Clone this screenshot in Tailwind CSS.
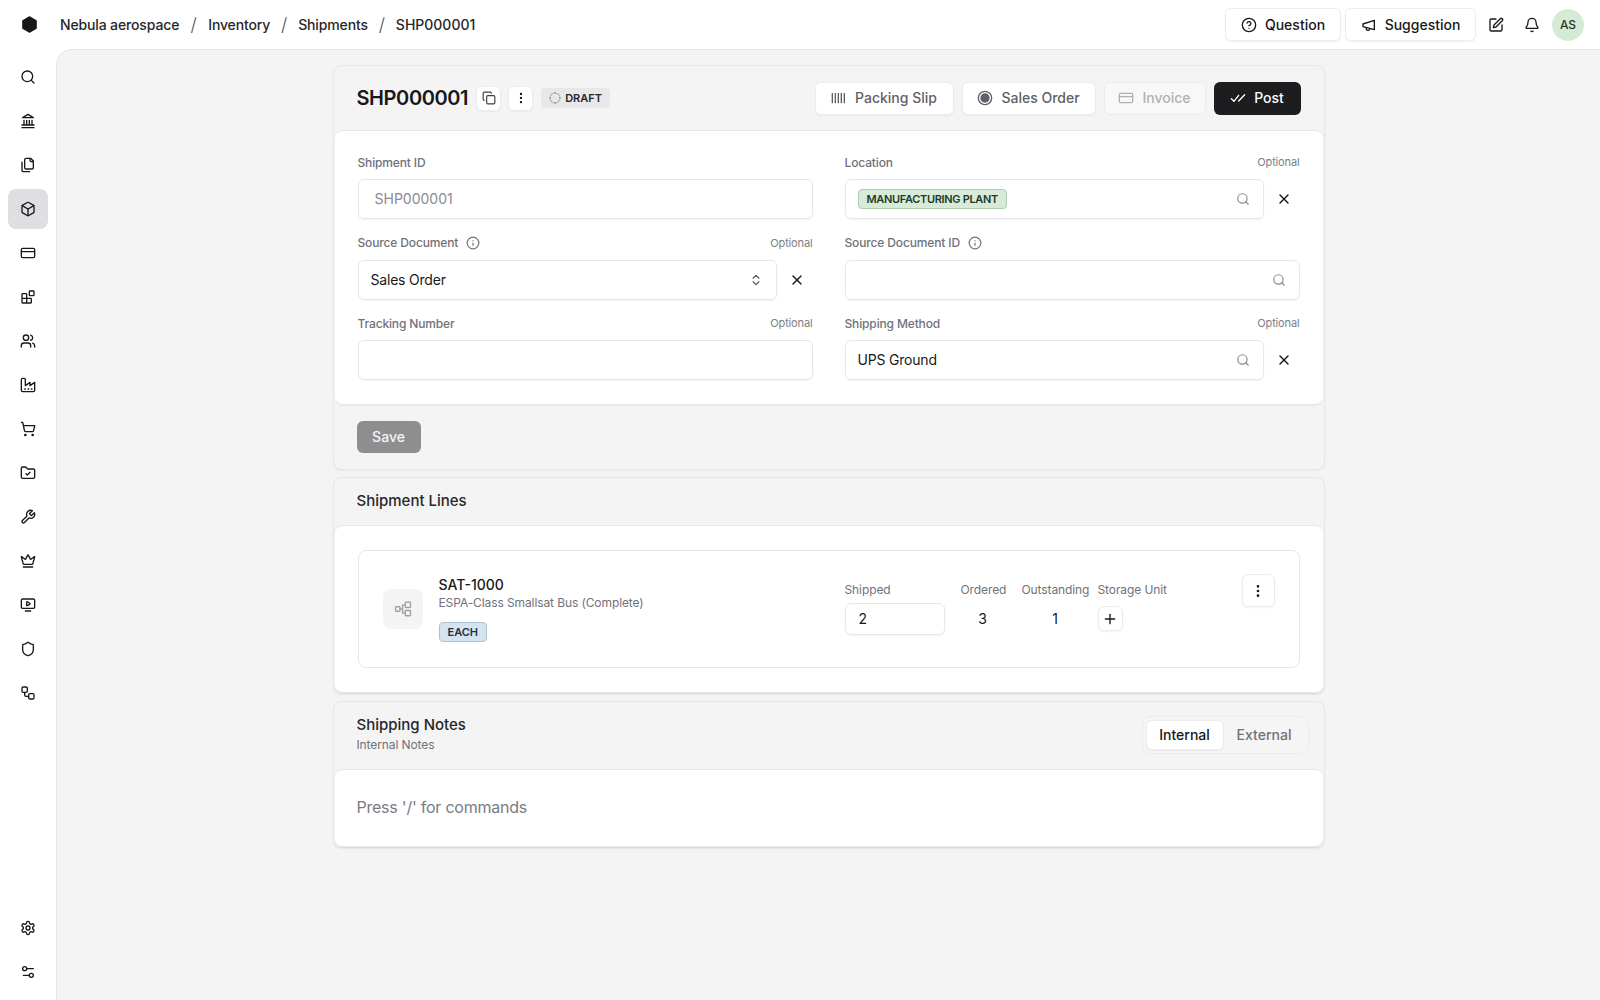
<!DOCTYPE html>
<html lang="en">
<head>
  <meta charset="UTF-8" />
  <title>SHP000001</title>
  <script src="https://cdn.jsdelivr.net/npm/@tailwindcss/browser@4"></script>
</head>
<body class="bg-white text-[#18181b] [font-family:Inter,sans-serif] overflow-hidden">
  <!-- icon sprite -->
  <svg class="hidden">
    <symbol id="i-search" viewBox="0 0 24 24"><circle cx="11" cy="11" r="8"/><path d="m21 21-4.3-4.3"/></symbol>
    <symbol id="i-landmark" viewBox="0 0 24 24"><path d="M3 22h18M6 18v-7M10 18v-7M14 18v-7M18 18v-7M3 18h18"/><path d="M12 2 20 7H4Z"/></symbol>
    <symbol id="i-files" viewBox="0 0 24 24"><path d="M20 7h-3a2 2 0 0 1-2-2V2"/><path d="M9 18a2 2 0 0 1-2-2V4a2 2 0 0 1 2-2h7l4 4v10a2 2 0 0 1-2 2Z"/><path d="M3 7.6v12.8A1.6 1.6 0 0 0 4.6 22h9.8"/></symbol>
    <symbol id="i-box" viewBox="0 0 24 24"><path d="M21 8a2 2 0 0 0-1-1.73l-7-4a2 2 0 0 0-2 0l-7 4A2 2 0 0 0 3 8v8a2 2 0 0 0 1 1.73l7 4a2 2 0 0 0 2 0l7-4A2 2 0 0 0 21 16Z"/><path d="m3.3 7 8.7 5 8.7-5"/><path d="M12 22V12"/></symbol>
    <symbol id="i-card" viewBox="0 0 24 24"><rect x="2" y="5" width="20" height="14" rx="2"/><path d="M2 10h20"/></symbol>
    <symbol id="i-blocks" viewBox="0 0 24 24"><rect x="14" y="3" width="7" height="7" rx="1"/><path d="M10 21V8a1 1 0 0 0-1-1H4a1 1 0 0 0-1 1v12a1 1 0 0 0 1 1h12a1 1 0 0 0 1-1v-5a1 1 0 0 0-1-1H3"/></symbol>
    <symbol id="i-users" viewBox="0 0 24 24"><path d="M16 21v-2a4 4 0 0 0-4-4H6a4 4 0 0 0-4 4v2"/><circle cx="9" cy="7" r="4"/><path d="M22 21v-2a4 4 0 0 0-3-3.87"/><path d="M16 3.13a4 4 0 0 1 0 7.75"/></symbol>
    <symbol id="i-factory" viewBox="0 0 24 24"><path d="M2 20a2 2 0 0 0 2 2h16a2 2 0 0 0 2-2V8l-7 5V8l-7 5V4a2 2 0 0 0-2-2H4a2 2 0 0 0-2 2Z"/><path d="M17 18h1M12 18h1M7 18h1"/></symbol>
    <symbol id="i-cart" viewBox="0 0 24 24"><circle cx="8" cy="21" r="1"/><circle cx="19" cy="21" r="1"/><path d="M2.05 2.05h2l2.66 12.42a2 2 0 0 0 2 1.58h9.78a2 2 0 0 0 1.95-1.57l1.65-7.43H5.12"/></symbol>
    <symbol id="i-folder" viewBox="0 0 24 24"><path d="M20 20a2 2 0 0 0 2-2V8a2 2 0 0 0-2-2h-7.9a2 2 0 0 1-1.69-.9L9.6 3.9A2 2 0 0 0 7.93 3H4a2 2 0 0 0-2 2v13a2 2 0 0 0 2 2Z"/><path d="m9 13 2 2 4-4"/></symbol>
    <symbol id="i-wrench" viewBox="0 0 24 24"><path d="M14.7 6.3a1 1 0 0 0 0 1.4l1.6 1.6a1 1 0 0 0 1.4 0l3.77-3.77a6 6 0 0 1-7.94 7.94l-6.91 6.91a2.12 2.12 0 0 1-3-3l6.91-6.91a6 6 0 0 1 7.94-7.94l-3.76 3.76z"/></symbol>
    <symbol id="i-crown" viewBox="0 0 24 24"><path d="M11.562 3.266a.5.5 0 0 1 .876 0L15.39 8.87a1 1 0 0 0 1.516.294L21.183 5.5a.5.5 0 0 1 .798.519l-2.834 10.246a1 1 0 0 1-.956.734H5.81a1 1 0 0 1-.957-.734L2.02 6.02a.5.5 0 0 1 .798-.519l4.276 3.664a1 1 0 0 0 1.516-.294z"/><path d="M5 21h14"/></symbol>
    <symbol id="i-monitor" viewBox="0 0 24 24"><path d="M10 7.75a.75.75 0 0 1 1.142-.638l3.664 2.249a.75.75 0 0 1 0 1.278l-3.664 2.25a.75.75 0 0 1-1.142-.64z"/><path d="M8 21h8"/><rect x="2" y="3" width="20" height="14" rx="2"/></symbol>
    <symbol id="i-shield" viewBox="0 0 24 24"><path d="M20 13c0 5-3.5 7.5-7.66 8.95a1 1 0 0 1-.67-.01C7.5 20.5 4 18 4 13V6a1 1 0 0 1 1-1c2 0 4.5-1.2 6.24-2.72a1.17 1.17 0 0 1 1.52 0C14.51 3.81 17 5 19 5a1 1 0 0 1 1 1z"/></symbol>
    <symbol id="i-workflow" viewBox="0 0 24 24"><rect x="3" y="3" width="8" height="8" rx="2"/><path d="M7 11v4a2 2 0 0 0 2 2h4"/><rect x="13" y="13" width="8" height="8" rx="2"/></symbol>
    <symbol id="i-gear" viewBox="0 0 24 24"><path d="M12.22 2h-.44a2 2 0 0 0-2 2v.18a2 2 0 0 1-1 1.73l-.43.25a2 2 0 0 1-2 0l-.15-.08a2 2 0 0 0-2.73.73l-.22.38a2 2 0 0 0 .73 2.73l.15.1a2 2 0 0 1 1 1.72v.51a2 2 0 0 1-1 1.74l-.15.09a2 2 0 0 0-.73 2.73l.22.38a2 2 0 0 0 2.73.73l.15-.08a2 2 0 0 1 2 0l.43.25a2 2 0 0 1 1 1.73V20a2 2 0 0 0 2 2h.44a2 2 0 0 0 2-2v-.18a2 2 0 0 1 1-1.73l.43-.25a2 2 0 0 1 2 0l.15.08a2 2 0 0 0 2.73-.73l.22-.39a2 2 0 0 0-.73-2.73l-.15-.08a2 2 0 0 1-1-1.74v-.5a2 2 0 0 1 1-1.74l.15-.09a2 2 0 0 0 .73-2.73l-.22-.38a2 2 0 0 0-2.73-.73l-.15.08a2 2 0 0 1-2 0l-.43-.25a2 2 0 0 1-1-1.73V4a2 2 0 0 0-2-2z"/><circle cx="12" cy="12" r="3"/></symbol>
    <symbol id="i-sliders" viewBox="0 0 24 24"><path d="M20 7h-9M14 17H5"/><circle cx="17" cy="17" r="3"/><circle cx="7" cy="7" r="3"/></symbol>
    <symbol id="i-help" viewBox="0 0 24 24"><circle cx="12" cy="12" r="10"/><path d="M9.09 9a3 3 0 0 1 5.83 1c0 2-3 3-3 3"/><path d="M12 17h.01"/></symbol>
    <symbol id="i-speaker" viewBox="0 0 24 24"><path d="M3 10.5 20 5v14L3 14.5Z"/><path d="M8 16v2a2 2 0 0 0 2 2h1a2 2 0 0 0 2-2"/></symbol>
    <symbol id="i-edit" viewBox="0 0 24 24"><path d="M12 3H5a2 2 0 0 0-2 2v14a2 2 0 0 0 2 2h14a2 2 0 0 0 2-2v-7"/><path d="M18.375 2.625a1 1 0 0 1 3 3l-9.013 9.014a2 2 0 0 1-.853.505l-2.873.84a.5.5 0 0 1-.62-.62l.84-2.873a2 2 0 0 1 .506-.852z"/></symbol>
    <symbol id="i-bell" viewBox="0 0 24 24"><path d="M10.268 21a2 2 0 0 0 3.464 0"/><path d="M3.262 15.326A1 1 0 0 0 4 17h16a1 1 0 0 0 .74-1.673C19.41 13.956 18 12.499 18 8A6 6 0 0 0 6 8c0 4.499-1.411 5.956-2.738 7.326"/></symbol>
    <symbol id="i-copy" viewBox="0 0 24 24"><rect x="8" y="8" width="14" height="14" rx="2"/><path d="M4 16c-1.1 0-2-.9-2-2V4c0-1.1.9-2 2-2h10c1.1 0 2 .9 2 2"/></symbol>
    <symbol id="i-dots" viewBox="0 0 24 24"><circle cx="12" cy="5" r="1"/><circle cx="12" cy="12" r="1"/><circle cx="12" cy="19" r="1"/></symbol>
    <symbol id="i-dashed" viewBox="0 0 24 24"><path d="M10.1 2.18a9.93 9.93 0 0 1 3.8 0"/><path d="M17.6 3.71a9.95 9.95 0 0 1 2.69 2.7"/><path d="M21.82 10.1a9.93 9.93 0 0 1 0 3.8"/><path d="M20.29 17.6a9.95 9.95 0 0 1-2.7 2.69"/><path d="M13.9 21.82a9.94 9.94 0 0 1-3.8 0"/><path d="M6.4 20.29a9.95 9.95 0 0 1-2.69-2.7"/><path d="M2.18 13.9a9.93 9.93 0 0 1 0-3.8"/><path d="M3.71 6.4a9.95 9.95 0 0 1 2.7-2.69"/></symbol>
    <symbol id="i-barcode" viewBox="0 0 24 24"><path d="M2 5v14M6.500 5v14M11 5v14M15.500 5v14M20 5v14"/></symbol>
    <symbol id="i-check2" viewBox="0 0 24 24"><path d="M2 13l4 4L13 8"/><path d="M13 16.5 22 7"/></symbol>
    <symbol id="i-x" viewBox="0 0 24 24"><path d="M18 6 6 18"/><path d="m6 6 12 12"/></symbol>
    <symbol id="i-info" viewBox="0 0 24 24"><circle cx="12" cy="12" r="10"/><path d="M12 16v-4"/><path d="M12 8h.01"/></symbol>
    <symbol id="i-updown" viewBox="0 0 24 24"><path d="m7 15 5 5 5-5"/><path d="m7 9 5-5 5 5"/></symbol>
    <symbol id="i-plus" viewBox="0 0 24 24"><path d="M5 12h14"/><path d="M12 5v14"/></symbol>
    <symbol id="i-network" viewBox="0 0 24 24"><rect x="2" y="9" width="6" height="6" rx="1"/><rect x="15" y="3" width="7" height="7" rx="1"/><rect x="15" y="14" width="7" height="7" rx="1"/><path d="M8 12h3.500M11.500 6.500v11M11.500 6.500H15M11.500 17.500H15"/></symbol>
  </svg>

  <div class="flex flex-col h-screen">
    <header class="h-[49px] flex items-center shrink-0 pr-4">
      <div class="w-[60px] flex justify-center pr-[1px]">
        <svg class="size-[17px]" viewBox="0 0 24 24" fill="#18181b"><path d="M12 1 21.500 6.500v11L12 23 2.500 17.500v-11Z" stroke="#18181b" stroke-width="1.500" stroke-linejoin="round"/></svg>
      </div>
      <nav class="flex items-center text-sm font-medium text-[#27272a]">
        <span class="tracking-[-0.14px]">Nebula aerospace</span>
        <span class="w-[29px] text-center text-lg font-light text-[#52525b]">/</span>
        <span class="tracking-[-0.14px]">Inventory</span>
        <span class="w-[28px] text-center text-lg font-light text-[#52525b]">/</span>
        <span class="tracking-[-0.14px]">Shipments</span>
        <span class="w-[28px] text-center text-lg font-light text-[#52525b]">/</span>
        <span>SHP000001</span>
      </nav>
      <div class="ml-auto flex items-center">
        <button class="h-[33px] w-[116px] flex items-center justify-center gap-2 bg-white border border-[#ececee] rounded-md shadow-xs text-sm font-medium">
          <svg class="size-4" fill="none" stroke="currentColor" stroke-width="2" stroke-linecap="round" stroke-linejoin="round"><use href="#i-help"/></svg>Question
        </button>
        <button class="h-[33px] w-[131px] ml-1 flex items-center justify-center gap-2 bg-white border border-[#ececee] rounded-md shadow-xs text-sm font-medium">
          <svg class="size-4" fill="none" stroke="currentColor" stroke-width="2" stroke-linecap="round" stroke-linejoin="round"><use href="#i-speaker"/></svg>Suggestion
        </button>
        <button class="size-8 ml-[4px] flex items-center justify-center">
          <svg class="size-4" fill="none" stroke="currentColor" stroke-width="2" stroke-linecap="round" stroke-linejoin="round"><use href="#i-edit"/></svg>
        </button>
        <button class="size-8 ml-1 flex items-center justify-center">
          <svg class="size-4" fill="none" stroke="currentColor" stroke-width="2" stroke-linecap="round" stroke-linejoin="round"><use href="#i-bell"/></svg>
        </button>
        <div class="size-8 ml-1 rounded-full bg-[#d6ebd6] text-[#1e3a28] text-xs font-medium flex items-center justify-center">AS</div>
      </div>
    </header>

    <div class="flex flex-1 min-h-0">
      <aside class="w-[56px] shrink-0 flex flex-col justify-between pl-2 pt-2 pb-[8px] text-[#18181b]">
        <div class="flex flex-col gap-1">
          <a class="size-10 flex items-center justify-center"><svg class="size-4" fill="none" stroke="currentColor" stroke-width="2" stroke-linecap="round" stroke-linejoin="round"><use href="#i-search"/></svg></a>
          <a class="size-10 flex items-center justify-center"><svg class="size-4" fill="none" stroke="currentColor" stroke-width="2" stroke-linecap="round" stroke-linejoin="round"><use href="#i-landmark"/></svg></a>
          <a class="size-10 flex items-center justify-center"><svg class="size-4" fill="none" stroke="currentColor" stroke-width="2" stroke-linecap="round" stroke-linejoin="round"><use href="#i-files"/></svg></a>
          <a class="size-10 flex items-center justify-center rounded-lg bg-[#dfdfe2]"><svg class="size-4" fill="none" stroke="currentColor" stroke-width="2" stroke-linecap="round" stroke-linejoin="round"><use href="#i-box"/></svg></a>
          <a class="size-10 flex items-center justify-center"><svg class="size-4" fill="none" stroke="currentColor" stroke-width="2" stroke-linecap="round" stroke-linejoin="round"><use href="#i-card"/></svg></a>
          <a class="size-10 flex items-center justify-center"><svg class="size-4" fill="none" stroke="currentColor" stroke-width="2" stroke-linecap="round" stroke-linejoin="round"><use href="#i-blocks"/></svg></a>
          <a class="size-10 flex items-center justify-center"><svg class="size-4" fill="none" stroke="currentColor" stroke-width="2" stroke-linecap="round" stroke-linejoin="round"><use href="#i-users"/></svg></a>
          <a class="size-10 flex items-center justify-center"><svg class="size-4" fill="none" stroke="currentColor" stroke-width="2" stroke-linecap="round" stroke-linejoin="round"><use href="#i-factory"/></svg></a>
          <a class="size-10 flex items-center justify-center"><svg class="size-4" fill="none" stroke="currentColor" stroke-width="2" stroke-linecap="round" stroke-linejoin="round"><use href="#i-cart"/></svg></a>
          <a class="size-10 flex items-center justify-center"><svg class="size-4" fill="none" stroke="currentColor" stroke-width="2" stroke-linecap="round" stroke-linejoin="round"><use href="#i-folder"/></svg></a>
          <a class="size-10 flex items-center justify-center"><svg class="size-4" fill="none" stroke="currentColor" stroke-width="2" stroke-linecap="round" stroke-linejoin="round"><use href="#i-wrench"/></svg></a>
          <a class="size-10 flex items-center justify-center"><svg class="size-4" fill="none" stroke="currentColor" stroke-width="2" stroke-linecap="round" stroke-linejoin="round"><use href="#i-crown"/></svg></a>
          <a class="size-10 flex items-center justify-center"><svg class="size-4" fill="none" stroke="currentColor" stroke-width="2" stroke-linecap="round" stroke-linejoin="round"><use href="#i-monitor"/></svg></a>
          <a class="size-10 flex items-center justify-center"><svg class="size-4" fill="none" stroke="currentColor" stroke-width="2" stroke-linecap="round" stroke-linejoin="round"><use href="#i-shield"/></svg></a>
          <a class="size-10 flex items-center justify-center"><svg class="size-4" fill="none" stroke="currentColor" stroke-width="2" stroke-linecap="round" stroke-linejoin="round"><use href="#i-workflow"/></svg></a>
        </div>
        <div class="flex flex-col gap-1">
          <a class="size-10 flex items-center justify-center"><svg class="size-4" fill="none" stroke="currentColor" stroke-width="2" stroke-linecap="round" stroke-linejoin="round"><use href="#i-gear"/></svg></a>
          <a class="size-10 flex items-center justify-center"><svg class="size-4" fill="none" stroke="currentColor" stroke-width="2" stroke-linecap="round" stroke-linejoin="round"><use href="#i-sliders"/></svg></a>
        </div>
      </aside>

      <main class="flex-1 min-w-0 bg-[#f4f4f4] border-l border-t border-[#e7e7e9] rounded-tl-2xl pt-[15px]">
        <div class="w-[992px] mx-auto flex flex-col gap-[7px]">

          <!-- shipment header + form -->
          <section class="bg-[#f4f4f4] border border-[#e7e7e9] rounded-lg shadow-xs">
            <div class="h-[64px] flex items-center pl-[23px] pr-[23px]">
              <h1 class="text-xl font-semibold tracking-[-0.4px]">SHP000001</h1>
              <button class="size-[25px] ml-[8px] flex items-center justify-center bg-white border border-[#ececee] rounded-md shadow-xs text-[#3f3f46]">
                <svg class="size-[14px]" fill="none" stroke="currentColor" stroke-width="2" stroke-linecap="round" stroke-linejoin="round"><use href="#i-copy"/></svg>
              </button>
              <button class="size-[25px] ml-[7px] flex items-center justify-center bg-white border border-[#ececee] rounded-md shadow-xs">
                <svg class="size-[14px]" fill="none" stroke="currentColor" stroke-width="2" stroke-linecap="round" stroke-linejoin="round"><use href="#i-dots"/></svg>
              </button>
              <span class="h-5 ml-[8px] px-[8px] flex items-center gap-[4px] bg-[#e8e8ea] rounded text-[11px] font-semibold text-[#27272a]">
                <svg class="size-3 text-[#71717a]" fill="none" stroke="currentColor" stroke-width="2" stroke-linecap="round" stroke-linejoin="round"><use href="#i-dashed"/></svg>DRAFT
              </span>
              <div class="ml-auto flex items-center gap-2">
                <button class="h-[33px] w-[139px] flex items-center justify-center gap-2 bg-white border border-[#ececee] rounded-md shadow-xs text-sm font-medium text-[#5f5f68]">
                  <svg class="size-4" fill="none" stroke="currentColor" stroke-width="2" stroke-linecap="round" stroke-linejoin="round"><use href="#i-barcode"/></svg>Packing Slip
                </button>
                <button class="h-[33px] w-[134px] flex items-center justify-center gap-2 bg-white border border-[#ececee] rounded-md shadow-xs text-sm font-medium text-[#5f5f68]">
                  <svg class="size-4" viewBox="0 0 24 24" fill="none" stroke="currentColor" stroke-width="2"><circle cx="12" cy="12" r="10"/><circle cx="12" cy="12" r="6" fill="currentColor"/></svg>Sales Order
                </button>
                <button class="h-[33px] w-[102px] flex items-center justify-center gap-2 bg-[#f8f8f8] border border-[#ececee] rounded-md text-sm font-medium text-[#b0b0b6]">
                  <svg class="size-4" fill="none" stroke="currentColor" stroke-width="2" stroke-linecap="round" stroke-linejoin="round"><use href="#i-card"/></svg>Invoice
                </button>
                <button class="h-[33px] w-[87px] flex items-center justify-center gap-2 bg-[#1d1d20] rounded-md text-sm font-medium text-white">
                  <svg class="size-4" fill="none" stroke="currentColor" stroke-width="2" stroke-linecap="round" stroke-linejoin="round"><use href="#i-check2"/></svg>Post
                </button>
              </div>
            </div>
            <div class="bg-white border-y border-[#e7e7e9] rounded-lg mx-px shadow-xs px-[23px] pt-[23px] pb-6 grid grid-cols-2 gap-x-8 gap-y-[15.5px]">
              <div>
                <div class="h-[17px] mb-[8px] flex items-center text-xs font-medium text-[#71717a] tracking-[-0.14px]">Shipment ID</div>
                <div class="h-10 px-4 flex items-center border border-[#e7e7e9] rounded-md shadow-xs text-sm text-[#8a8a92]">SHP000001</div>
              </div>
              <div>
                <div class="h-[17px] mb-[8px] flex items-center justify-between text-xs font-medium text-[#71717a] tracking-[-0.14px]">Location<span class="text-[11px] font-normal text-[#7d7d85]">Optional</span></div>
                <div class="flex items-center">
                  <div class="flex-1 h-10 pl-[12px] pr-[13px] flex items-center justify-between border border-[#e7e7e9] rounded-md shadow-xs">
                    <span class="h-5 px-2 flex items-center bg-[#d8ebd9] border border-[#a9cfae] rounded text-[11px] font-semibold text-[#1e3a28] tracking-[-0.32px]">MANUFACTURING PLANT</span>
                    <svg class="size-[14px] text-[#8a8a92]" fill="none" stroke="currentColor" stroke-width="2" stroke-linecap="round" stroke-linejoin="round"><use href="#i-search"/></svg>
                  </div>
                  <button class="w-[36px] ml-0 flex justify-end pr-[8px]"><svg class="size-4" fill="none" stroke="currentColor" stroke-width="2" stroke-linecap="round" stroke-linejoin="round"><use href="#i-x"/></svg></button>
                </div>
              </div>
              <div>
                <div class="h-[17px] mb-[8px] flex items-center justify-between text-xs font-medium text-[#71717a] tracking-[-0.14px]">
                  <span class="flex items-center gap-2">Source Document<svg class="size-[14px]" fill="none" stroke="currentColor" stroke-width="2" stroke-linecap="round" stroke-linejoin="round"><use href="#i-info"/></svg></span>
                  <span class="text-[11px] font-normal text-[#7d7d85]">Optional</span>
                </div>
                <div class="flex items-center">
                  <div class="flex-1 h-10 pl-3 pr-[13px] flex items-center justify-between border border-[#e7e7e9] rounded-md shadow-xs text-sm tracking-[-0.2px]">
                    Sales Order
                    <svg class="size-[14px] text-[#52525b]" fill="none" stroke="currentColor" stroke-width="2" stroke-linecap="round" stroke-linejoin="round"><use href="#i-updown"/></svg>
                  </div>
                  <button class="w-[36px] flex justify-end pr-[8px]"><svg class="size-4" fill="none" stroke="currentColor" stroke-width="2" stroke-linecap="round" stroke-linejoin="round"><use href="#i-x"/></svg></button>
                </div>
              </div>
              <div>
                <div class="h-[17px] mb-[8px] flex items-center gap-2 text-xs font-medium text-[#71717a] tracking-[-0.14px]">Source Document ID<svg class="size-[14px]" fill="none" stroke="currentColor" stroke-width="2" stroke-linecap="round" stroke-linejoin="round"><use href="#i-info"/></svg></div>
                <div class="h-10 pl-3 pr-[13px] flex items-center justify-end border border-[#e7e7e9] rounded-md shadow-xs">
                  <svg class="size-[14px] text-[#8a8a92]" fill="none" stroke="currentColor" stroke-width="2" stroke-linecap="round" stroke-linejoin="round"><use href="#i-search"/></svg>
                </div>
              </div>
              <div>
                <div class="h-[17px] mb-[8px] flex items-center justify-between text-xs font-medium text-[#71717a] tracking-[-0.14px]">Tracking Number<span class="text-[11px] font-normal text-[#7d7d85]">Optional</span></div>
                <div class="h-10 border border-[#e7e7e9] rounded-md shadow-xs"></div>
              </div>
              <div>
                <div class="h-[17px] mb-[8px] flex items-center justify-between text-xs font-medium text-[#71717a] tracking-[-0.14px]">Shipping Method<span class="text-[11px] font-normal text-[#7d7d85]">Optional</span></div>
                <div class="flex items-center">
                  <div class="flex-1 h-10 pl-3 pr-[13px] flex items-center justify-between border border-[#e7e7e9] rounded-md shadow-xs text-sm tracking-[-0.2px]">
                    UPS Ground
                    <svg class="size-[14px] text-[#8a8a92]" fill="none" stroke="currentColor" stroke-width="2" stroke-linecap="round" stroke-linejoin="round"><use href="#i-search"/></svg>
                  </div>
                  <button class="w-[36px] flex justify-end pr-[8px]"><svg class="size-4" fill="none" stroke="currentColor" stroke-width="2" stroke-linecap="round" stroke-linejoin="round"><use href="#i-x"/></svg></button>
                </div>
              </div>
            </div>
            <div class="h-[64px] flex items-center pl-[23px]">
              <button class="h-8 w-16 rounded-md bg-[#8e8e90] text-white/90 text-sm font-medium">Save</button>
            </div>
          </section>

          <!-- shipment lines -->
          <section class="bg-[#f4f4f4] border border-[#e7e7e9] rounded-lg shadow-xs">
            <div class="h-[47px] flex items-center pl-[23px]">
              <h2 class="text-[15px] font-[450] text-[#27272a]">Shipment Lines</h2>
            </div>
            <div class="bg-white border-y border-[#e7e7e9] rounded-lg mx-px shadow-xs px-[23px] py-6">
              <div class="h-[118px] border border-[#e7e7e9] rounded-lg flex pl-6 pr-6 relative">
                <div class="size-10 mt-[38px] rounded-lg bg-[#f4f4f4] flex items-center justify-center text-[#a1a1aa]">
                  <svg class="size-[18px]" fill="none" stroke="currentColor" stroke-width="1.800" stroke-linecap="round" stroke-linejoin="round"><use href="#i-network"/></svg>
                </div>
                <div class="ml-4 w-[406px] pt-[24px]">
                  <div class="text-sm font-medium leading-5">SAT-1000</div>
                  <div class="text-xs text-[#71717a] leading-4 tracking-[-0.1px]">ESPA-Class Smallsat Bus (Complete)</div>
                  <span class="inline-flex h-5 mt-[11px] px-2 items-center bg-[#d3e4ee] border border-[#a9c3d3] rounded text-[11px] font-semibold text-[#1b3347]">EACH</span>
                </div>
                <div class="flex pt-[31px] text-xs text-[#71717a] tracking-[-0.1px]">
                  <div class="w-[116px]">
                    <div class="leading-4">Shipped</div>
                    <div class="mt-[5px] h-8 w-[100px] px-[13px] flex items-center border border-[#e7e7e9] rounded-md shadow-xs text-sm text-[#18181b]">2</div>
                  </div>
                  <div class="w-[61px]">
                    <div class="leading-4">Ordered</div>
                    <div class="mt-[5px] h-8 w-[44px] flex items-center justify-center text-sm text-[#18181b]">3</div>
                  </div>
                  <div class="w-[76px]">
                    <div class="leading-4">Outstanding</div>
                    <div class="mt-[5px] h-8 w-[67px] flex items-center justify-center text-sm text-[#18181b]">1</div>
                  </div>
                  <div>
                    <div class="leading-4">Storage Unit</div>
                    <button class="mt-[8px] size-[25px] flex items-center justify-center border border-[#ececee] rounded-md shadow-xs text-[#18181b]">
                      <svg class="size-4" fill="none" stroke="currentColor" stroke-width="2" stroke-linecap="round" stroke-linejoin="round"><use href="#i-plus"/></svg>
                    </button>
                  </div>
                </div>
                <button class="absolute right-[24px] top-[23px] size-[33px] flex items-center justify-center border border-[#ececee] rounded-md shadow-xs">
                  <svg class="size-4" fill="none" stroke="currentColor" stroke-width="2" stroke-linecap="round" stroke-linejoin="round"><use href="#i-dots"/></svg>
                </button>
              </div>
            </div>
          </section>

          <!-- notes -->
          <section class="bg-[#f4f4f4] border border-[#e7e7e9] rounded-lg shadow-xs">
            <div class="h-[67px] flex pl-[23px] pr-[15px]">
              <div class="pt-[11px]">
                <h2 class="text-[15px] font-[450] leading-6 text-[#27272a]">Shipping Notes</h2>
                <div class="text-xs text-[#71717a] leading-4 tracking-[-0.1px]">Internal Notes</div>
              </div>
              <div class="ml-auto mt-[14px] h-[38px] w-[167px] p-[3px] flex items-center bg-[#f5f5f5] border border-[#ececee] rounded-lg text-sm font-medium">
                <span class="h-[30px] w-[78px] flex items-center justify-center bg-white rounded-md shadow-xs border border-[#ececee]">Internal</span>
                <span class="flex-1 text-center text-[#71717a]">External</span>
              </div>
            </div>
            <div class="h-[78px] pb-[2px] bg-white border-y border-[#e7e7e9] rounded-lg mx-px shadow-xs px-[22px] flex items-center text-base text-[#7b7b83] tracking-[-0.23px]">
              Press '/' for commands
            </div>
          </section>

        </div>
      </main>
    </div>
  </div>
</body>
</html>
